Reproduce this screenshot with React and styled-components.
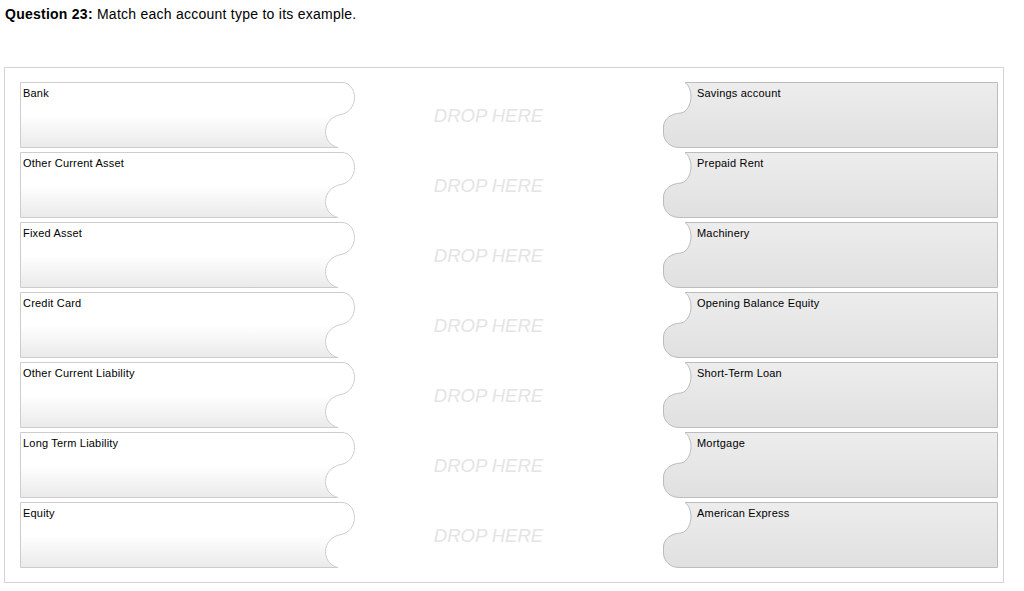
import { useId } from "react";
import styled, { createGlobalStyle } from "styled-components";

const PAIRS = [
  ["Bank", "Savings account"],
  ["Other Current Asset", "Prepaid Rent"],
  ["Fixed Asset", "Machinery"],
  ["Credit Card", "Opening Balance Equity"],
  ["Other Current Liability", "Short-Term Loan"],
  ["Long Term Liability", "Mortgage"],
  ["Equity", "American Express"],
];

// outline of the two puzzle pieces (pixel coords inside each piece)
const LEFT_PATH =
  "M0.5 0.5 H322 C329 0.5 334.5 7 334.5 15.5 C334.5 24 329 31 321 32.5 C312 34 305.5 41 305.5 49.5 C305.5 58 311 64 318 65.5 H0.5 Z";
const RIGHT_PATH =
  "M22 0.5 H334.5 V65.5 H16 C7 65.5 0.5 59 0.5 51 V45 C0.5 37 8 31.5 18 31 C24 30 28 22 28 15 C28 8 25.5 3 22 0.5 Z";

const PieceShape = ({ side }) => {
  const id = useId().replace(/:/g, "");
  const isLeft = side === "left";
  return (
    <Shape width="335" height="66" viewBox="0 0 335 66">
      <defs>
        <linearGradient id={id} x1="0" y1="0" x2="0" y2="1">
          {isLeft ? (
            <>
              <stop offset="0" stopColor="#ffffff" />
              <stop offset="0.5" stopColor="#ffffff" />
              <stop offset="1" stopColor="#eaeaea" />
            </>
          ) : (
            <>
              <stop offset="0" stopColor="#ededed" />
              <stop offset="1" stopColor="#e0e0e0" />
            </>
          )}
        </linearGradient>
      </defs>
      <path
        d={isLeft ? LEFT_PATH : RIGHT_PATH}
        fill={`url(#${id})`}
        stroke={isLeft ? "#cdcdcd" : "#bcbcbc"}
        strokeWidth="1"
      />
    </Shape>
  );
};

const App = () => {
  return (
    <Page>
      <GlobalStyle />
      <Title>
        <strong>Question 23:</strong> Match each account type to its example.
      </Title>
      <Board>
        {PAIRS.map(([type, example]) => (
          <Row key={type}>
            <Piece>
              <PieceShape side="left" />
              <Label>{type}</Label>
            </Piece>
            <DropZone>DROP HERE</DropZone>
            <Piece $right>
              <PieceShape side="right" />
              <Label>{example}</Label>
            </Piece>
          </Row>
        ))}
      </Board>
    </Page>
  );
};

const GlobalStyle = createGlobalStyle`
  body {
    margin: 0;
    background: #fff;
    font-family: "Liberation Sans", Arial, sans-serif;
    color: #000;
  }
`;

const Page = styled.div`
  padding: 0 0 0 4px;
  width: 1000px;
`;

const Title = styled.h1`
  margin: 6px 0 0 1px;
  font-size: 14px;
  line-height: 17px;
  font-weight: normal;
  letter-spacing: 0.25px;
  strong {
    font-weight: bold;
  }
`;

const Board = styled.div`
  box-sizing: border-box;
  width: 1000px;
  margin-top: 44px;
  padding: 14px 5px 14px 15px;
  border: 1px solid #d4d4d4;
  display: grid;
  row-gap: 4px;
`;

const Row = styled.div`
  display: grid;
  grid-template-columns: 335px 1fr 335px;
  height: 66px;
`;

const Piece = styled.div`
  position: relative;
  height: 66px;
  padding: 1px 0 0 ${(p) => (p.$right ? "34px" : "3px")};
  box-sizing: border-box;
`;

const Shape = styled.svg`
  position: absolute;
  left: 0;
  top: 0;
  overflow: visible;
`;

const Label = styled.span`
  position: relative;
  font-size: 11px;
  line-height: 14px;
  letter-spacing: 0.2px;
`;

const DropZone = styled.div`
  display: flex;
  align-items: center;
  justify-content: center;
  padding: 1px 41px 0 0;
  font-size: 18.5px;
  font-style: italic;
  color: #e4e4e4;
  user-select: none;
`;

export default App;
